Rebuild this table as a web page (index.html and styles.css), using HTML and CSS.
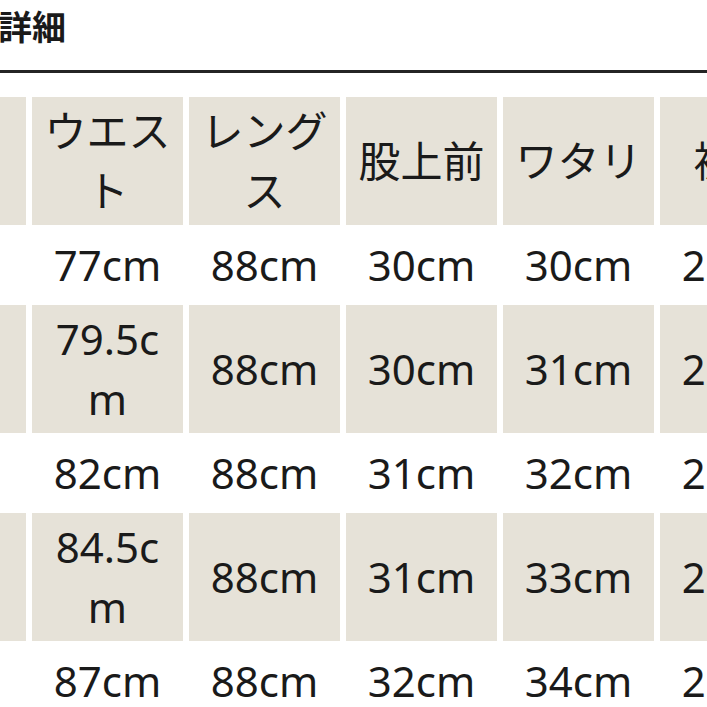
FILE: index.html
```html
<!DOCTYPE html>
<html lang="ja">
<head>
<meta charset="utf-8">
<title>サイズ詳細</title>
<link rel="stylesheet" href="styles.css">
</head>
<body>
<div class="page">
  <h1 class="title">詳細</h1>
  <div class="table-wrap">
    <table class="size-table">
      <tr class="head">
        <td></td>
        <td>ウエスト</td>
        <td>レングス</td>
        <td>股上前</td>
        <td>ワタリ</td>
        <td>裾幅</td>
      </tr>
      <tr>
        <td>S</td>
        <td>77cm</td>
        <td>88cm</td>
        <td>30cm</td>
        <td>30cm</td>
        <td>20cm</td>
      </tr>
      <tr class="shade">
        <td>M</td>
        <td>79.5cm</td>
        <td>88cm</td>
        <td>30cm</td>
        <td>31cm</td>
        <td>21cm</td>
      </tr>
      <tr>
        <td>L</td>
        <td>82cm</td>
        <td>88cm</td>
        <td>31cm</td>
        <td>32cm</td>
        <td>21cm</td>
      </tr>
      <tr class="shade">
        <td>XL</td>
        <td>84.5cm</td>
        <td>88cm</td>
        <td>31cm</td>
        <td>33cm</td>
        <td>22cm</td>
      </tr>
      <tr>
        <td>XXL</td>
        <td>87cm</td>
        <td>88cm</td>
        <td>32cm</td>
        <td>34cm</td>
        <td>22cm</td>
      </tr>
    </table>
  </div>
</div>
</body>
</html>
```

FILE: styles.css
```css
html, body {
  margin: 0;
  padding: 0;
  background: #ffffff;
}

.page {
  width: 707px;
  height: 707px;
  overflow: hidden;
  font-family: "Noto Sans", "Noto Sans CJK JP", sans-serif;
  color: #1a1a1a;
}

.title {
  margin: 0 -2px 0 -2px;
  font-family: "Noto Sans CJK JP", sans-serif;
  font-size: 34px;
  font-weight: 700;
  line-height: 52px;
  height: 52px;
  padding-bottom: 18px;
  border-bottom: 3px solid #242424;
}

.table-wrap {
  margin-top: 18px;
  margin-left: -131px;
}

.size-table {
  border-collapse: separate;
  border-spacing: 6px 6px;
  table-layout: fixed;
  width: 948px;
}

.size-table td {
  width: 151px;
  height: 128px;
  padding: 4px 8px;
  box-sizing: border-box;
  font-size: 42px;
  line-height: 60px;
  text-align: center;
  vertical-align: middle;
  word-break: break-all;
  font-weight: 400;
}

.size-table tr:not(.head):not(.shade) td {
  height: 68px;
}

.size-table .head td,
.size-table .shade td {
  background: #e6e2d8;
}
```
